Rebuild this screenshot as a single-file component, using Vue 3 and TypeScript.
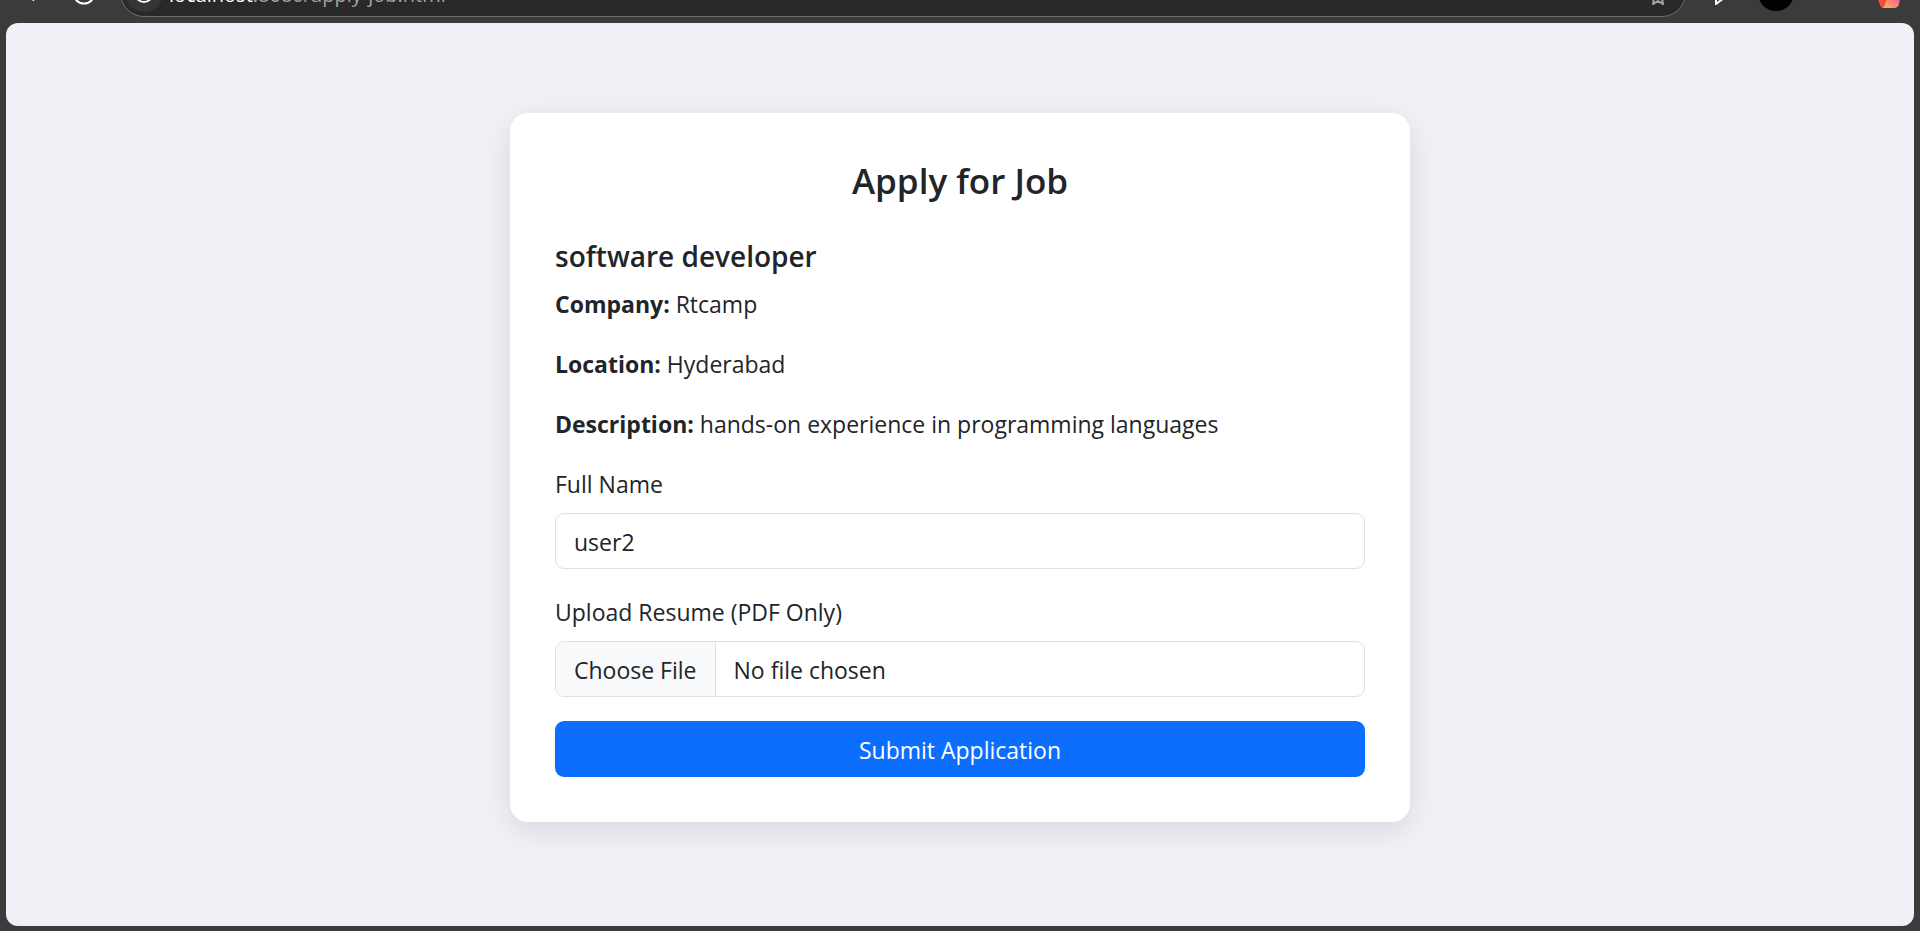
<script setup lang="ts">
import { ref } from 'vue'

interface Detail {
  label: string
  value: string
}

const jobTitle = 'software developer'
const details: Detail[] = [
  { label: 'Company:', value: 'Rtcamp' },
  { label: 'Location:', value: 'Hyderabad' },
  { label: 'Description:', value: 'hands-on experience in programming languages' },
]
const fullName = ref('user2')
</script>

<template>
  <div class="window">
    <header class="toolbar">
      <button class="tool back" type="button" aria-label="Back">
        <svg width="24" height="24" viewBox="0 0 24 24"><path d="M22 12H3M12 2.500 2.500 12l9.500 9.500" /></svg>
      </button>
      <button class="tool reload" type="button" aria-label="Refresh">
        <svg width="24" height="24" viewBox="0 0 24 24"><circle cx="12" cy="12" r="10.500" /></svg>
      </button>
      <div class="address">
        <button class="site" type="button" aria-label="Site information">
          <svg width="20" height="20" viewBox="0 0 20 20"><circle cx="10" cy="10" r="9" /></svg>
        </button>
        <span class="url"><b>localhost</b>:8080/apply-job.html</span>
        <button class="star" type="button" aria-label="Add to favorites">
          <svg width="18" height="18" viewBox="0 0 18 18"><path d="m9 1 2.500 5 5.500.8-4 3.900.9 6.300L9 14l-4.900 3 .9-6.300-4-3.900 5.500-.8z" /></svg>
        </button>
      </div>
      <button class="tool play" type="button" aria-label="Extensions">
        <svg width="16" height="20" viewBox="0 0 16 20"><path d="M2 1v18L14 10z" /></svg>
      </button>
      <button class="avatar" type="button" aria-label="Profile"></button>
      <button class="copilot" type="button" aria-label="Copilot">
        <svg width="26" height="24" viewBox="0 0 26 24">
          <defs>
            <linearGradient id="warm" x1="0.700" y1="0.500" x2="0.400" y2="1">
              <stop offset="0" stop-color="#f4628c" />
              <stop offset="1" stop-color="#ffac5a" />
            </linearGradient>
          </defs>
          <path d="M4 2h18q4 0 3.500 5L23 20q-1 4-5 4H8q-3 0-4-4L1 12z" fill="url(#warm)" />
          <path d="M0 12h12l-3 8q-1 4-3 4-1-1-2-4z" fill="#ee5037" />
        </svg>
      </button>
    </header>

    <main class="page">
      <section class="card">
        <h2>Apply for Job</h2>
        <h5>{{ jobTitle }}</h5>
        <p v-for="d in details" :key="d.label">
          <strong>{{ d.label }}</strong> {{ d.value }}
        </p>
        <form @submit.prevent>
          <div class="field">
            <label for="name">Full Name</label>
            <input id="name" v-model="fullName" class="control" type="text" />
          </div>
          <div class="field">
            <label for="resume">Upload Resume (PDF Only)</label>
            <input id="resume" class="control" type="file" accept="application/pdf" />
          </div>
          <button class="submit" type="submit">Submit Application</button>
        </form>
      </section>
    </main>
  </div>
</template>

<style>
body {
  margin: 0;
}
</style>

<style scoped>
.window {
  box-sizing: border-box;
  min-height: 100vh;
  display: flex;
  flex-direction: column;
  padding: 0 6px 5px;
  background: #3b3b3b;
  color: #212529;
  font-family: 'Segoe UI', 'Open Sans', 'Noto Sans', sans-serif;
  font-size: 23px;
  line-height: 36px;
}

.toolbar {
  height: 23px;
  display: flex;
  align-items: flex-end;
  overflow: hidden;
}

.toolbar button {
  flex: none;
  display: flex;
  padding: 0;
  border: 0;
  background: none;
}

.toolbar svg {
  fill: none;
  stroke: #fff;
  stroke-width: 2;
}

.tool.back {
  margin: 0 26px 20px 16px;
}

.tool.reload {
  margin: 0 24px 18px 0;
}

.address {
  flex: 1;
  box-sizing: border-box;
  height: 48px;
  display: flex;
  align-items: center;
  margin-bottom: 6px;
  padding: 0 18px 0 4px;
  border: 1px solid #6e6e6e;
  border-radius: 24px;
  background: #292929;
}

.toolbar .site {
  width: 38px;
  height: 38px;
  align-items: center;
  justify-content: center;
  border-radius: 50%;
  background: #363636;
}

.url {
  flex: 1;
  margin-left: 6px;
  padding-top: 4px;
  color: #a3a3a3;
  font-size: 20px;
}

.url b {
  color: #fff;
  font-weight: 400;
}

.toolbar .star {
  padding-top: 6px;
}

.toolbar .star svg {
  stroke: #a3a3a3;
}

.tool.play {
  margin: 0 28px 18px 28px;
}

.toolbar .avatar {
  width: 36px;
  height: 36px;
  margin-bottom: 12px;
  border-radius: 50%;
  background: #000;
}

.toolbar .copilot {
  margin: 0 12px 15px 82px;
}

.toolbar .copilot svg {
  stroke: none;
}

.page {
  flex: 1;
  padding: 90px 24px;
  border-radius: 12px;
  background: #f0f1f6;
}

.card {
  box-sizing: border-box;
  max-width: 900px;
  margin: 0 auto;
  padding: 45px;
  border-radius: 18px;
  background: #fff;
  box-shadow: 0 8px 30px rgba(0, 0, 0, 0.1);
}

h2 {
  margin: 0 0 34px;
  font-size: 35px;
  font-weight: 600;
  line-height: 45px;
  text-align: center;
}

h5 {
  margin: 0 0 10px;
  font-size: 28px;
  font-weight: 600;
  line-height: 38px;
}

p {
  margin: 0 0 22px;
  line-height: 38px;
}

strong {
  font-weight: 700;
}

.field {
  margin-bottom: 24px;
}

label {
  display: block;
  margin-bottom: 10px;
  line-height: 38px;
}

.control {
  box-sizing: border-box;
  display: block;
  width: 100%;
  height: 56px;
  padding: 10px 18px 8px;
  border: 1px solid #dee2e6;
  border-radius: 9px;
  overflow: hidden;
  background: #fff;
  color: inherit;
  font: inherit;
}

.control::file-selector-button {
  height: 56px;
  margin: -10px 18px -10px -18px;
  padding: 10px 18px;
  border: 0 solid #dee2e6;
  border-right-width: 1px;
  background: #f8f9fa;
  color: inherit;
  font: inherit;
}

.submit {
  display: block;
  width: 100%;
  height: 56px;
  padding: 10px 18px 8px;
  border: 0;
  border-radius: 9px;
  background: #0d6efd;
  color: #fff;
  font: inherit;
}
</style>
